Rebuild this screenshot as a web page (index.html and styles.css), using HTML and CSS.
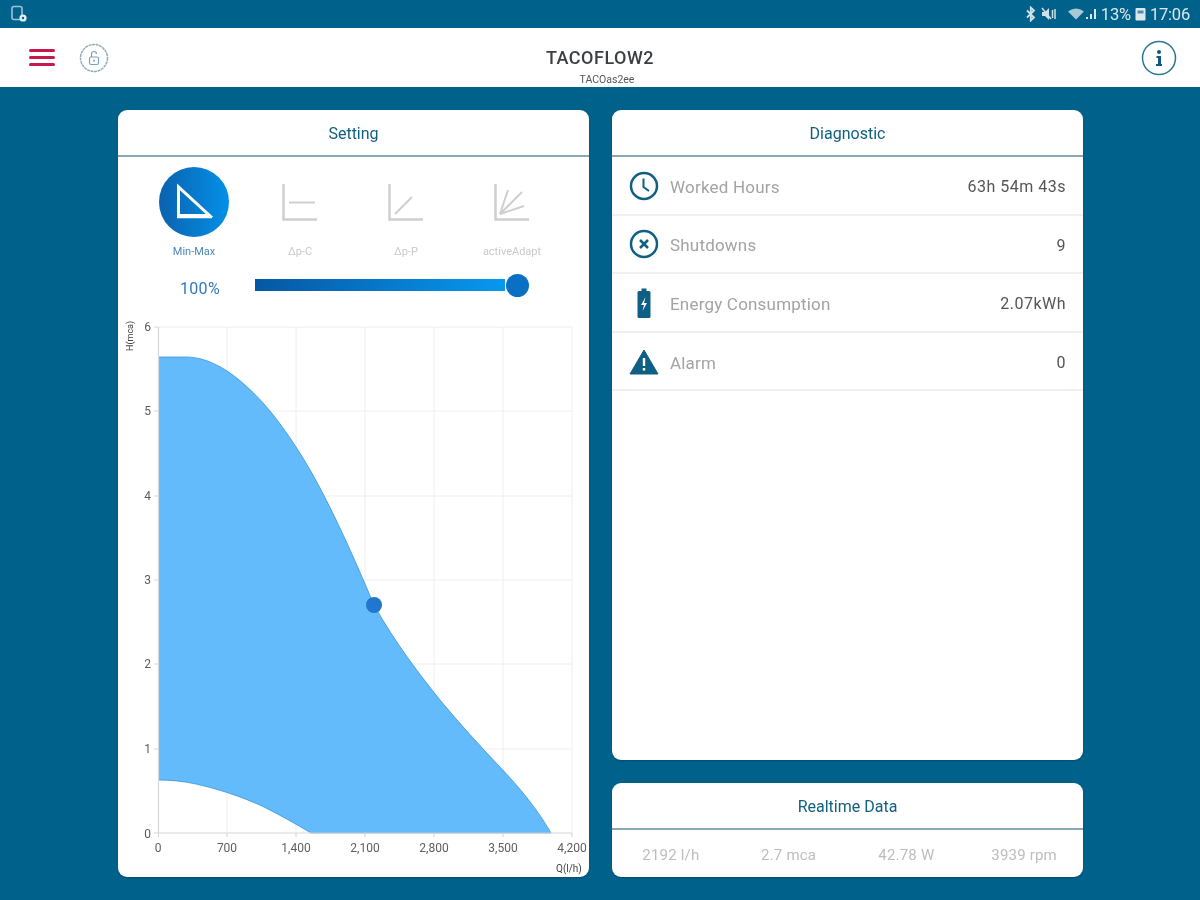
FILE: index.html
```html
<!DOCTYPE html>
<html lang="en">
<head>
<meta charset="utf-8">
<title>TACOFLOW2</title>
<link rel="stylesheet" href="styles.css">
</head>
<body>
<div class="app">
  <div class="status">
    <svg class="st-left" width="18" height="18" viewBox="0 0 18 18"><rect x="2" y="1.500" width="10" height="13" rx="2" fill="none" stroke="#9cc4d8" stroke-width="1.600"/><circle cx="13" cy="13" r="3.600" fill="#e4eff4"/><circle cx="13" cy="13" r="1.200" fill="#00628a"/></svg>
    <div class="st-right">
      <svg width="12" height="16" viewBox="0 0 12 16"><path d="M2 4.500l7 7-3.200 3V1.500L9 4.500l-7 7" fill="none" stroke="#cfe0e8" stroke-width="1.800"/></svg>
      <svg width="16" height="14" viewBox="0 0 16 14"><path d="M1 5h3l4-4v12l-4-4H1z" fill="#cfe0e8"/><path d="M1 1l9 11M11.500 3v8M14 2v10" stroke="#cfe0e8" stroke-width="1.500"/></svg>
      <svg class="st-wifi" width="30" height="14" viewBox="0 0 30 14"><path d="M1 4.500Q9-1.500 17 4.500L9 12.500z" fill="#a9c8d6"/><rect x="19" y="10" width="2" height="2" fill="#dbe8ee"/><rect x="23" y="7" width="2" height="5" fill="#dbe8ee"/><rect x="27" y="2" width="2" height="10" fill="#dbe8ee"/></svg>
      <span class="st-text">13%</span>
      <svg width="11" height="14" viewBox="0 0 11 14"><rect x="0.500" y="1" width="10" height="12.500" rx="1" fill="#dbe8ee"/><rect x="2.500" y="3.500" width="6" height="3" fill="#4f8fab"/></svg>
      <span class="st-text">17:06</span>
    </div>
  </div>

  <header class="topbar">
    <div class="tb-left">
      <div class="burger"><i></i><i></i><i></i></div>
      <svg class="lock" width="30" height="30" viewBox="0 0 30 30"><circle cx="15" cy="15" r="13.500" fill="none" stroke="#8fadb9" stroke-width="1.500" stroke-dasharray="3 .6"/><rect x="10.500" y="14" width="9" height="7.500" rx="1.500" fill="none" stroke="#7ba3b5" stroke-width="1.200"/><path d="M12.500 14v-3a2.500 2.500 0 0 1 5 0" fill="none" stroke="#7ba3b5" stroke-width="1.200"/><circle cx="15" cy="17.700" r="1" fill="#7ba3b5"/></svg>
    </div>
    <div class="tb-title">
      <div class="tb-name">TACOFLOW2</div>
      <div class="tb-sub">TACOas2ee</div>
    </div>
    <svg class="info" width="36" height="36" viewBox="0 0 36 36"><circle cx="18" cy="18" r="16.500" fill="none" stroke="#2c7594" stroke-width="1.500"/><rect x="16" y="10" width="4" height="4" rx="2" fill="#0b5a88"/><path d="M15.500 16h4.500v8h1v2h-6v-2H17v-6h-1.500z" fill="#0b5a88"/></svg>
  </header>

  <main class="content">
    <section class="card setting">
      <h2 class="card-head">Setting</h2>
      <div class="modes">
        <div class="mode active">
          <div class="mode-icon">
            <svg width="70" height="70" viewBox="0 0 70 70"><path d="M19.500 20V48.500h31z" fill="none" stroke="#fff" stroke-width="3" stroke-linejoin="miter"/><path d="M18 50.500h35" stroke="#fff" stroke-width="1.500"/></svg>
          </div>
          <div class="mode-label">Min-Max</div>
        </div>
        <div class="mode">
          <div class="mode-icon">
            <svg width="70" height="70" viewBox="0 0 70 70"><path d="M18.500 17v35.500H52" fill="none" stroke="#cfcfcf" stroke-width="2.500"/><path d="M24 35.500h26" stroke="#cfcfcf" stroke-width="2"/></svg>
          </div>
          <div class="mode-label">Δp-C</div>
        </div>
        <div class="mode">
          <div class="mode-icon">
            <svg width="70" height="70" viewBox="0 0 70 70"><path d="M18.500 17v35.500H52" fill="none" stroke="#cfcfcf" stroke-width="2.500"/><path d="M24 47l17-17" stroke="#cfcfcf" stroke-width="2"/></svg>
          </div>
          <div class="mode-label">Δp-P</div>
        </div>
        <div class="mode">
          <div class="mode-icon">
            <svg width="70" height="70" viewBox="0 0 70 70"><path d="M18.500 17v35.500H52" fill="none" stroke="#cfcfcf" stroke-width="2.500"/><path d="M23 47l8-24M23 47l22-22M23 47l24-8" fill="none" stroke="#cfcfcf" stroke-width="2"/></svg>
          </div>
          <div class="mode-label">activeAdapt</div>
        </div>
      </div>
      <div class="slider-row">
        <div class="slider-value">100%</div>
        <div class="slider">
          <div class="slider-track"></div>
          <div class="slider-thumb"></div>
        </div>
      </div>
      <svg class="chart" width="471" height="557" viewBox="118 320 471 557">
        <g class="grid">
          <path d="M227 327V833M296 327V833M365 327V833M434 327V833M503 327V833M572 327V833"/>
          <path d="M158 327H572M158 411H572M158 496H572M158 580H572M158 664H572M158 749H572"/>
        </g>
        <path class="area" d="M158.500 357H186C204 357 224 366 245 385C268 405 288 433 306 463C328 500 350 548 374 605C396 644 420 675 440 700C460 724 480 746 500 767C520 788 538 810 551 833H311C296 824 280 815 262 806C240 796 218 789 196 784C182 781 170 780 158.500 780Z"/>
        <path class="axis" d="M158.500 327V833H572"/>
        <path class="ticks" d="M154 327h4M154 411h4M154 496h4M154 580h4M154 664h4M154 749h4M154 833h4M158.500 833v4M227 833v4M296 833v4M365 833v4M434 833v4M503 833v4M572 833v4"/>
        <circle class="point" cx="374" cy="605" r="8"/>
        <g class="labels-y">
          <text x="151" y="331">6</text>
          <text x="151" y="415">5</text>
          <text x="151" y="500">4</text>
          <text x="151" y="584">3</text>
          <text x="151" y="668">2</text>
          <text x="151" y="753">1</text>
          <text x="151" y="838">0</text>
        </g>
        <g class="labels-x">
          <text x="158" y="852">0</text>
          <text x="227" y="852">700</text>
          <text x="296" y="852">1,400</text>
          <text x="365" y="852">2,100</text>
          <text x="434" y="852">2,800</text>
          <text x="503" y="852">3,500</text>
          <text x="572" y="852">4,200</text>
        </g>
        <text class="axis-title axis-title-y" transform="translate(133 351) rotate(-90)">H(mca)</text>
        <text class="axis-title" x="556" y="872">Q(l/h)</text>
      </svg>
    </section>

    <div class="right">
      <section class="card diagnostic">
        <h2 class="card-head">Diagnostic</h2>
        <div class="diag-row">
          <svg width="30" height="30" viewBox="0 0 30 30"><circle cx="15" cy="15" r="13" fill="none" stroke="#0f5f84" stroke-width="2.500"/><path d="M14.500 7.500V16l5.500 4" fill="none" stroke="#0f5f84" stroke-width="2"/></svg>
          <span class="diag-label">Worked Hours</span>
          <span class="diag-value">63h 54m 43s</span>
        </div>
        <div class="diag-row">
          <svg width="30" height="30" viewBox="0 0 30 30"><circle cx="15" cy="15" r="13" fill="none" stroke="#0f5f84" stroke-width="2.500"/><path d="M11 11l8 8M19 11l-8 8" fill="none" stroke="#0f5f84" stroke-width="2.500"/></svg>
          <span class="diag-label">Shutdowns</span>
          <span class="diag-value">9</span>
        </div>
        <div class="diag-row">
          <svg width="30" height="30" viewBox="0 0 30 30"><path d="M12.500 0.500h5v2.500h2.500a1.500 1.500 0 0 1 1.500 1.500v24a1.500 1.500 0 0 1-1.500 1.500H10a1.500 1.500 0 0 1-1.500-1.500v-24A1.500 1.500 0 0 1 10 3h2.500z" fill="#0f5f84"/><path d="M16.500 9l-4.500 8h3l-1.500 6 4.500-8h-3z" fill="#fff"/></svg>
          <span class="diag-label">Energy Consumption</span>
          <span class="diag-value">2.07kWh</span>
        </div>
        <div class="diag-row">
          <svg width="30" height="30" viewBox="0 0 30 30"><path d="M15 3L29 27H1z" fill="#0f5f84" stroke="#0f5f84" stroke-linejoin="round"/><rect x="13.800" y="11" width="2.400" height="8" fill="#fff"/><rect x="13.800" y="21" width="2.400" height="2.500" fill="#fff"/></svg>
          <span class="diag-label">Alarm</span>
          <span class="diag-value">0</span>
        </div>
      </section>
      <section class="card realtime">
        <h2 class="card-head">Realtime Data</h2>
        <div class="rt-grid">
          <span>2192 l/h</span>
          <span>2.7 mca</span>
          <span>42.78 W</span>
          <span>3939 rpm</span>
        </div>
      </section>
    </div>
  </main>
</div>
</body>
</html>
```

FILE: styles.css
```css
* { box-sizing: border-box; }
html, body { margin: 0; padding: 0; }
body {
  width: 1200px;
  height: 900px;
  overflow: hidden;
  background: #00628a;
  font-family: Roboto, "Liberation Sans", sans-serif;
}
.app {
  width: 1200px;
  height: 900px;
  display: flex;
  flex-direction: column;
  filter: blur(0.6px);
}
.status {
  height: 28px;
  flex: none;
  display: flex;
  align-items: center;
  justify-content: space-between;
  padding: 0 10px;
  color: #dbe8ee;
}
.st-left { display: block; }
.st-right { display: flex; align-items: center; gap: 4px; }
.st-wifi { margin-left: 6px; }
.st-text { font-size: 16.500px; letter-spacing: -0.2px; }
.topbar {
  height: 59px;
  flex: none;
  background: #fff;
  display: flex;
  align-items: center;
  justify-content: space-between;
  padding: 0 23px 0 29px;
  position: relative;
}
.tb-left { display: flex; align-items: center; gap: 24px; }
.burger { width: 26px; display: flex; flex-direction: column; gap: 4px; }
.burger i { display: block; height: 3px; border-radius: 2px; background: #c8174a; }
.lock { display: block; }
.tb-title {
  position: absolute;
  left: 0;
  right: 0;
  top: 20px;
  text-align: center;
  color: #3b3f42;
}
.tb-name { font-size: 18px; font-weight: 500; letter-spacing: 0.5px; line-height: 20px; }
.tb-sub { font-size: 10.500px; line-height: 11px; margin: 6px 0 0 14px; color: #555; }
.info { display: block; }
.content {
  flex: 1;
  display: flex;
  gap: 23px;
  padding: 23px 117px 23px 118px;
  min-height: 0;
}
.card {
  background: #fff;
  border-radius: 9px;
  box-shadow: 0 1px 2px rgba(0, 40, 60, .35);
  overflow: hidden;
}
.setting { width: 471px; position: relative; }
.card-head {
  margin: 0;
  height: 47px;
  padding-top: 2px;
  border-bottom: 2px solid #8aa9b8;
  display: flex;
  align-items: center;
  justify-content: center;
  font-size: 16px;
  font-weight: 400;
  color: #0f5f7f;
}
.modes {
  display: grid;
  grid-template-columns: repeat(4, 106px);
  padding: 10px 0 0 23px;
}
.mode { display: flex; flex-direction: column; align-items: center; }
.mode-icon { width: 70px; height: 70px; border-radius: 50%; }
.mode-icon svg { display: block; }
.mode.active .mode-icon { background: linear-gradient(90deg, #0b62ae, #0390e8); }
.mode-label {
  margin-top: 8px;
  font-size: 11px;
  line-height: 13px;
  color: #c9c9c9;
}
.mode.active .mode-label { color: #4c86b8; }
.slider-row {
  display: flex;
  align-items: center;
  margin-top: 14px;
  height: 26px;
}
.slider-value {
  width: 137px;
  padding-left: 62px;
  font-size: 16px;
  color: #2f7ab8;
  letter-spacing: 0.3px;
  margin-top: 7px;
}
.slider { position: relative; width: 274px; height: 23px; display: flex; align-items: center; }
.slider-track {
  width: 250px;
  height: 12px;
  background: linear-gradient(90deg, #0657a3, #0798ef);
}
.slider-thumb {
  position: absolute;
  right: 0;
  top: 0;
  width: 23px;
  height: 23px;
  border-radius: 50%;
  background: #0a70c4;
}
.chart { position: absolute; left: 0; top: 210px; display: block; }
.grid path { fill: none; stroke: #eeeeee; stroke-width: 1; }
.area { fill: #64bbfb; stroke: #3b93d8; stroke-width: 0.8; }
.axis, .ticks { fill: none; stroke: #d8d8d8; stroke-width: 1.200; }
.point { fill: #1f77d0; }
.labels-y text { font-size: 12px; fill: #5a5a5a; text-anchor: end; }
.labels-x text { font-size: 12px; fill: #5f5f5f; text-anchor: middle; }
.axis-title { font-size: 10px; fill: #444; }
.axis-title-y { font-size: 9px; }
.right {
  width: 471px;
  display: flex;
  flex-direction: column;
  gap: 23px;
}
.diagnostic { flex: 1; }
.diag-row {
  height: 58.600px;
  display: flex;
  align-items: center;
  padding: 3px 17px 0;
  border-bottom: 2px solid #eef0f1;
}
.diag-row svg { display: block; flex: none; margin-top: -2px; }
.diag-label {
  margin-left: 11px;
  flex: 1;
  font-size: 17px;
  letter-spacing: 0.2px;
  color: #a3a3a3;
}
.diag-value { font-size: 16px; color: #555; letter-spacing: 0.5px; }
.realtime { height: 94px; flex: none; }
.rt-grid {
  display: grid;
  grid-template-columns: repeat(4, 1fr);
  padding-top: 16px;
  text-align: center;
  font-size: 15px;
  letter-spacing: 0.2px;
  color: #bdbdbd;
}
```
